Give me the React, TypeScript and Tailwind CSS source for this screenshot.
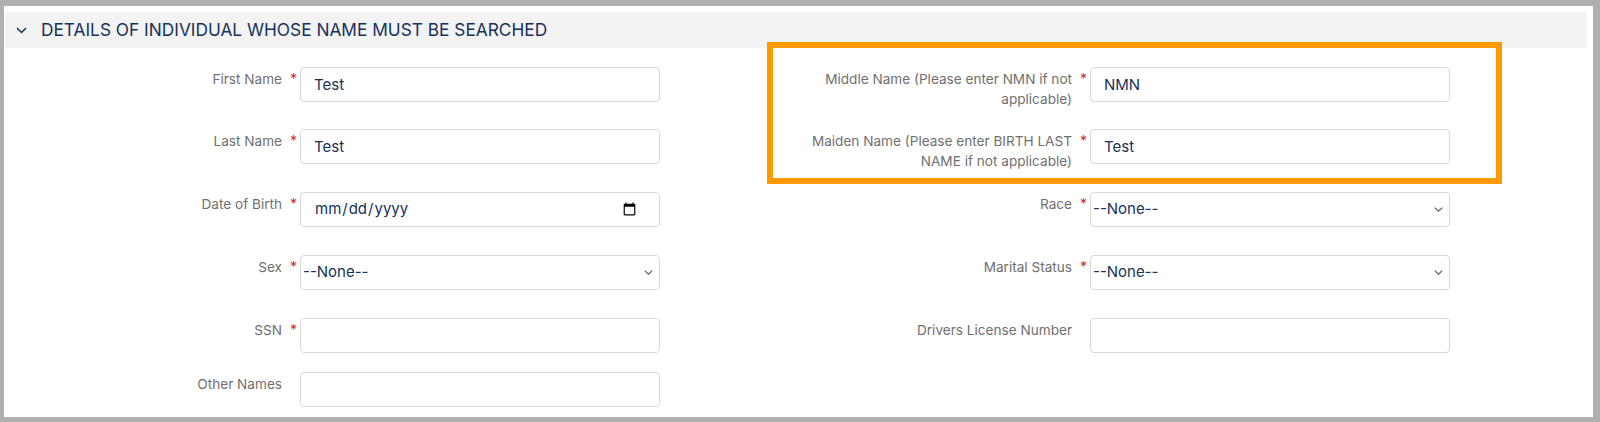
import React from 'react';

const labelCls = 'w-[277px] shrink-0 pt-[2px] text-right text-[13.6px] leading-5 text-[#6f6f6f]';
const boxCls =
  'w-[360px] h-[35px] shrink-0 rounded-[4px] border border-[#d9d9d9] bg-white text-[15px] text-[#16325c] outline-none';

const Star = ({ show }: { show: boolean }) => (
  <span className="w-[18px] shrink-0 pl-[8px] pt-[2px] text-[14px] leading-5 text-[#d8262b]">
    {show ? '*' : ''}
  </span>
);

const TextField = ({ label, value, required = true }: { label: string; value?: string; required?: boolean }) => (
  <div className="flex items-start">
    <label className={labelCls}>{label}</label>
    <Star show={required} />
    <input type="text" defaultValue={value} className={`${boxCls} pl-[13px]`} />
  </div>
);

const SelectField = ({ label }: { label: string }) => (
  <div className="flex items-start">
    <label className={labelCls}>{label}</label>
    <Star show />
    <div className="relative">
      <select defaultValue="" className={`${boxCls} appearance-none pl-[2px]`}>
        <option value="">--None--</option>
      </select>
      <svg
        className="pointer-events-none absolute right-[7px] top-[15px]"
        width="9"
        height="5"
        viewBox="0 0 9 5"
        fill="none"
      >
        <path d="M0.8 0.6 L4.5 4.2 L8.2 0.6" stroke="#4b5a78" strokeWidth="1.1" />
      </svg>
    </div>
  </div>
);

const DateField = ({ label }: { label: string }) => (
  <div className="flex items-start">
    <label className={labelCls}>{label}</label>
    <Star show />
    <input type="date" className={`${boxCls} pl-[13px] pr-[20px]`} />
  </div>
);

const App = () => {
  return (
    <div className="relative h-[422px] w-[1600px] bg-[#b0b0b0] pb-[5px] pl-[4px] pr-[7px] pt-[6px] font-['Inter','Liberation_Sans',sans-serif]">
      <div className="h-full bg-white pl-[1px] pr-[6px] pt-[6px]">
        <div className="flex h-[36px] items-center gap-[14px] bg-[#f3f3f3] pl-[11px]">
          <svg width="11" height="7" viewBox="0 0 11 7" fill="none">
            <path d="M1 1 L5.5 5.5 L10 1" stroke="#16325c" strokeWidth="1.5" />
          </svg>
          <h2 className="text-[17.3px] text-[#16325c]">DETAILS OF INDIVIDUAL WHOSE NAME MUST BE SEARCHED</h2>
        </div>

        <div className="mt-[19px] grid grid-cols-[790px_790px] grid-rows-[62px_63px_63px_63px_54px_35px]">
          <TextField label="First Name" value="Test" />
          <TextField label="Middle Name (Please enter NMN if not applicable)" value="NMN" />
          <TextField label="Last Name" value="Test" />
          <TextField label="Maiden Name (Please enter BIRTH LAST NAME if not applicable)" value="Test" />
          <DateField label="Date of Birth" />
          <SelectField label="Race" />
          <SelectField label="Sex" />
          <SelectField label="Marital Status" />
          <TextField label="SSN" />
          <TextField label="Drivers License Number" required={false} />
          <TextField label="Other Names" required={false} />
        </div>
      </div>

      {/* highlight box drawn over the form */}
      <div className="pointer-events-none absolute left-[767px] top-[42px] h-[142px] w-[735px] border-[6px] border-[#ff9900]" />
    </div>
  );
};

export default App;
